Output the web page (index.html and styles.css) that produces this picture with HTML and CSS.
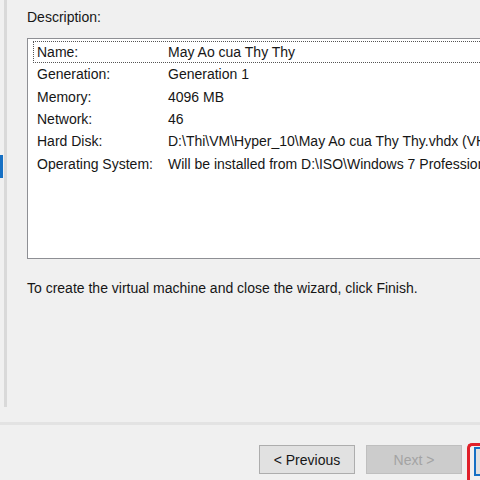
FILE: index.html
```html
<!DOCTYPE html>
<html>
<head>
<meta charset="utf-8">
<link rel="stylesheet" href="styles.css">
</head>
<body>
<div class="page">
  <div class="main">
    <div class="rail">
      <div class="rail-tabcol"><div class="rail-tab"></div></div>
      <div class="rail-line"></div>
    </div>
    <div class="content">
      <div class="label">Description:</div>
      <div class="desc-box">
        <div class="row focused"><span class="key">Name:</span><span class="val">May Ao cua Thy Thy</span></div>
        <div class="row"><span class="key">Generation:</span><span class="val">Generation 1</span></div>
        <div class="row"><span class="key">Memory:</span><span class="val">4096 MB</span></div>
        <div class="row"><span class="key">Network:</span><span class="val">46</span></div>
        <div class="row"><span class="key">Hard Disk:</span><span class="val">D:\Thi\VM\Hyper_10\May Ao cua Thy Thy.vhdx (VHDX, dynamically expanding)</span></div>
        <div class="row"><span class="key">Operating System:</span><span class="val">Will be installed from D:\ISO\Windows 7 Professional.iso</span></div>
      </div>
      <div class="hint">To create the virtual machine and close the wizard, click Finish.</div>
    </div>
  </div>
  <div class="footer">
    <div class="buttons">
      <button class="btn">&lt; Previous</button>
      <button class="btn disabled">Next &gt;</button>
      <div class="finish-wrap"><button class="btn primary">Finish</button></div>
    </div>
  </div>
</div>
</body>
</html>
```

FILE: styles.css
```css
html, body {
  margin: 0;
  padding: 0;
  background: #f0f0f0;
  overflow: hidden;
}
.page {
  width: 480px;
  height: 480px;
  display: flex;
  flex-direction: column;
  font-family: "Liberation Sans", "DejaVu Sans", sans-serif;
  font-size: 14px;
  color: #161616;
  overflow: hidden;
}
.main {
  height: 407px;
  display: flex;
  flex-shrink: 0;
}
.rail {
  display: flex;
  width: 7px;
  flex-shrink: 0;
}
.rail-tabcol {
  width: 4px;
}
.rail-tab {
  margin-top: 155px;
  height: 23px;
  width: 3px;
  background: #1670c4;
}
.rail-line {
  width: 3px;
  background: #d9d9d9;
}
.content {
  flex: 1;
  padding-left: 20px;
  padding-top: 9px;
  min-width: 0;
}
.label {
  line-height: 16px;
  height: 16px;
}
.desc-box {
  margin-top: 13px;
  height: 221px;
  background: #ffffff;
  border: 1px solid #8e8f94;
  border-right: none;
  padding: 2px 0 0 5px;
  box-sizing: border-box;
  overflow: hidden;
}
.row {
  display: flex;
  height: 22.3px;
  align-items: center;
  white-space: nowrap;
  padding-left: 4px;
}
.row.focused {
  border: 1px dotted #555;
  border-right: none;
  padding-left: 3px;
  box-sizing: border-box;
}
.key {
  width: 131px;
  flex-shrink: 0;
}
.val {
  white-space: nowrap;
}
.hint {
  margin-top: 21px;
  line-height: 16px;
}
.footer {
  margin-top: 15px;
  border-top: 3px solid #e3e3e3;
  flex: 1;
}
.buttons {
  display: flex;
  padding-left: 259px;
  padding-top: 20px;
  gap: 11px;
  align-items: flex-start;
}
.btn {
  width: 96px;
  height: 29px;
  flex-shrink: 0;
  font-family: inherit;
  font-size: 14px;
  color: #161616;
  background: #e1e1e1;
  border: 1px solid #adadad;
  padding: 0;
}
.btn.disabled {
  background: #cccccc;
  border-color: #bfbfbf;
  color: #a3a3a3;
}
.finish-wrap {
  margin-top: -2px;
  margin-left: -6px;
  border: 3px solid #e0202a;
  border-right: none;
  border-radius: 5px 0 0 5px;
  padding: 1px 0 0 4px;
  height: 40px;
  flex-shrink: 0;
}
.btn.primary {
  border: 2px solid #1670c4;
  background: #e1e1e1;
}
```
